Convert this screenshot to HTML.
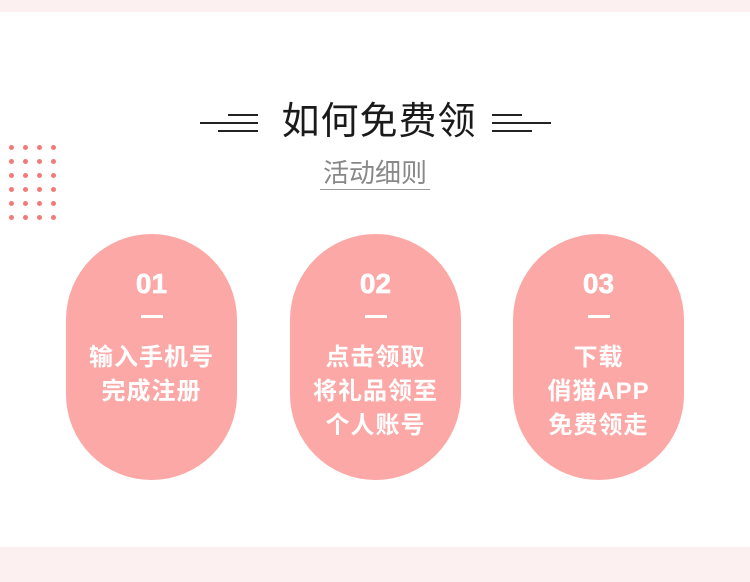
<!DOCTYPE html>
<html><head><meta charset="utf-8"><style>
*{margin:0;padding:0;box-sizing:border-box}
body{width:750px;height:582px;background:#fff;position:relative;overflow:hidden;font-family:"Liberation Sans","Noto Sans CJK SC",sans-serif}
.band{position:absolute;left:0;width:750px;background:#fdf0f1}
.l{position:absolute;height:2px;background:#222}
.dot{position:absolute;width:5px;height:5px;border-radius:50%;background:#f47a7a}
.pill{position:absolute;top:234px;width:171px;height:246px;border-radius:86px;background:#fba8a6;color:#fff;text-align:center}
.num{position:absolute;top:35px;left:0;width:100%;font-size:28px;font-weight:900;line-height:30px;letter-spacing:0px;-webkit-text-stroke:0.6px #fff}
.dash{position:absolute;top:81px;left:75px;width:22px;height:3px;background:#fff}
.txt{position:absolute;top:107px;left:0;width:100%;font-size:24px;line-height:34px;font-weight:bold;letter-spacing:1px}
</style></head><body>
<div class="band" style="top:0;height:12px"></div>
<div class="band" style="top:547px;height:35px"></div>

<div class="l" style="left:228px;top:114px;width:30px"></div>
<div class="l" style="left:200px;top:122px;width:58px"></div>
<div class="l" style="left:218px;top:130px;width:40px"></div>
<div class="l" style="left:492px;top:114px;width:30px"></div>
<div class="l" style="left:492px;top:122px;width:59px"></div>
<div class="l" style="left:492px;top:130px;width:40px"></div>

<div style="position:absolute;left:270px;top:99px;width:218px;text-align:center;font-size:38px;line-height:46px;color:#1a1a1a;letter-spacing:1px">如何免费领</div>
<div style="position:absolute;left:315px;top:156px;width:120px;text-align:center;font-size:26px;line-height:34px;color:#888">活动细则</div>
<div style="position:absolute;left:320px;top:189px;width:110px;height:1px;background:#999"></div>

<div class="dot" style="left:9px;top:145px"></div><div class="dot" style="left:23px;top:145px"></div><div class="dot" style="left:37px;top:145px"></div><div class="dot" style="left:51px;top:145px"></div>
<div class="dot" style="left:9px;top:159px"></div><div class="dot" style="left:23px;top:159px"></div><div class="dot" style="left:37px;top:159px"></div><div class="dot" style="left:51px;top:159px"></div>
<div class="dot" style="left:9px;top:173px"></div><div class="dot" style="left:23px;top:173px"></div><div class="dot" style="left:37px;top:173px"></div><div class="dot" style="left:51px;top:173px"></div>
<div class="dot" style="left:9px;top:187px"></div><div class="dot" style="left:23px;top:187px"></div><div class="dot" style="left:37px;top:187px"></div><div class="dot" style="left:51px;top:187px"></div>
<div class="dot" style="left:9px;top:201px"></div><div class="dot" style="left:23px;top:201px"></div><div class="dot" style="left:37px;top:201px"></div><div class="dot" style="left:51px;top:201px"></div>
<div class="dot" style="left:9px;top:215px"></div><div class="dot" style="left:23px;top:215px"></div><div class="dot" style="left:37px;top:215px"></div><div class="dot" style="left:51px;top:215px"></div>

<div class="pill" style="left:66px"><div class="num">01</div><div class="dash"></div><div class="txt">输入手机号<br>完成注册</div></div>
<div class="pill" style="left:290px"><div class="num">02</div><div class="dash"></div><div class="txt">点击领取<br>将礼品领至<br>个人账号</div></div>
<div class="pill" style="left:513px"><div class="num">03</div><div class="dash"></div><div class="txt">下载<br>俏猫APP<br>免费领走</div></div>
</body></html>
